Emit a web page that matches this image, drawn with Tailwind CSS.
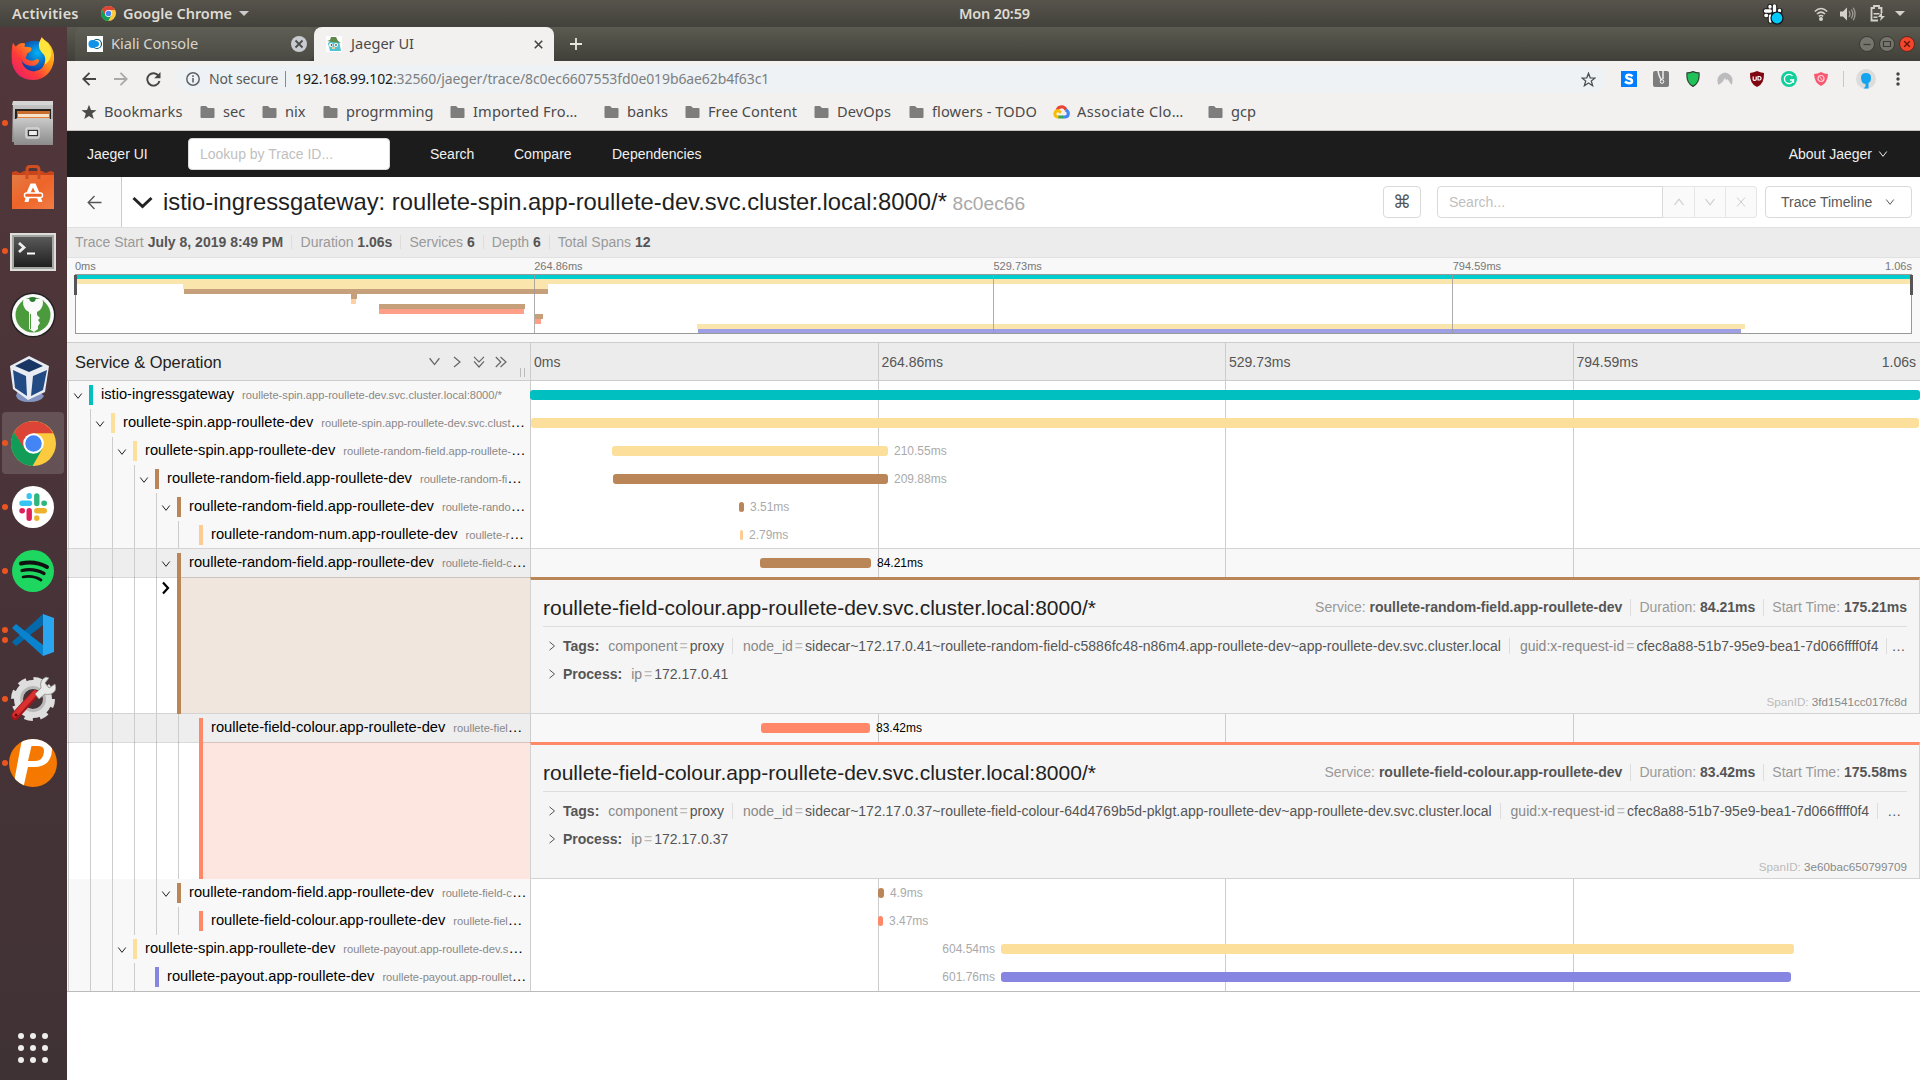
<!DOCTYPE html>
<html lang="en">
<head>
<meta charset="utf-8">
<title>Jaeger UI</title>
<script src="https://cdn.jsdelivr.net/npm/@tailwindcss/browser@4"></script>
</head>
<body class="w-[1920px] h-[1080px] overflow-hidden bg-white font-['Liberation_Sans',Arial,sans-serif] text-sm text-[#222]">
<svg class="hidden">
  <defs>
    <symbol id="chrome" viewBox="0 0 48 48">
      <circle cx="24" cy="24" r="24" fill="#fcca3f"/>
      <path d="M24 13H44.9A24 24 0 0 0 3.2 12L14 31Z" fill="#db4437"/>
      <path d="M3.2 12A24 24 0 0 0 23 48L33.5 29.5 24 34 14.5 29.5Z" fill="#119d58"/>
      <circle cx="24" cy="24" r="11" fill="#fff"/>
      <circle cx="24" cy="24" r="8.8" fill="#4385f4"/>
    </symbol>
    <symbol id="folder" viewBox="0 0 16 14"><path d="M1.5 1H6l2 2h5.500q1 0 1 1v8q0 1-1 1h-12q-1 0-1-1V2q0-1 1-1z" fill="#7d7d7d"/></symbol>
    <symbol id="down" viewBox="0 0 12 12"><path d="M1.500 3 6 8.800 10.500 3" fill="none" stroke="currentColor" stroke-width="1.200"/></symbol>
    <symbol id="right" viewBox="0 0 12 12"><path d="M3 1 9 6 3 11" fill="none" stroke="currentColor" stroke-width="1.200"/></symbol>
    <symbol id="ddown" viewBox="0 0 12 12"><path d="M1 .8 6 5.800 11 .8M1 5.300 6 11 11 5.300" fill="none" stroke="currentColor" stroke-width="1.200"/></symbol>
    <symbol id="dright" viewBox="0 0 12 12"><path d="M.8 1 5.800 6 .8 11M5.500 1 11 6 5.500 11" fill="none" stroke="currentColor" stroke-width="1.200"/></symbol>
  </defs>
</svg>

<!-- GNOME top bar -->
<header class="h-[27px] flex items-center bg-linear-to-b from-[#57544c] to-[#42413b] text-[#dfdbd2] font-['Noto_Sans',sans-serif] font-semibold text-[14.500px] leading-[26px]">
  <div class="w-[101px] pl-3 pb-[2px] tracking-[0.200px]">Activities</div>
  <svg class="size-[15px]"><use href="#chrome"/></svg>
  <div class="w-[116px] pl-[7px] pb-[2px] tracking-[-0.050px] whitespace-nowrap">Google Chrome</div>
  <div class="ml-[7px] border-x-[5px] border-x-transparent border-t-[5px] border-t-[#ccc]"></div>
  <div class="ml-[710px] w-[80px] pb-[2px] tracking-[-0.200px]">Mon 20:59</div>
  <svg class="ml-auto mr-[30px]" width="22" height="22" viewBox="0 0 22 22">
    <g stroke="#222" stroke-width="5.500" stroke-linecap="round"><path d="M8 3.500V7M12.500 3.500V9M3.500 8H9M14 8h4M4 12.500h4.500M8.500 13v5"/></g>
    <g stroke="#fff" stroke-width="3.300" stroke-linecap="round"><path d="M8 3.500v.5M12.500 3v5M3.500 8h4.800M17.500 7.500v.5M3.800 12.500h.8M8.500 13v5"/></g>
    <circle cx="15" cy="15" r="6" fill="#00c8f8" stroke="#111" stroke-width="1.200"/>
  </svg>
  <svg class="mr-3" width="14" height="16" viewBox="0 0 14 16" fill="none" stroke="#d5d2cb" stroke-width="1.600"><path d="M.8 5.500Q7-.5 13.200 5.500M3 8Q7 4.200 11 8M4.800 10.400Q7 8.600 9.200 10.400"/><circle cx="7" cy="13" r="1.200" fill="#d5d2cb"/></svg>
  <svg class="mr-[14px]" width="16" height="14" viewBox="0 0 16 14"><path d="M0 4.500h3l4-4v13l-4-4H0z" fill="#d5d2cb"/><path d="M9 4q2 3 0 6M11.300 2.500q3 4.500 0 9M13.300.8q3.500 6.200 0 12.400" fill="none" stroke="#a09d96" stroke-width="1.300"/></svg>
  <svg class="mr-[10px]" width="15" height="17" viewBox="0 0 15 17"><path d="M11.500 8V3H9V1H4v2H1.500v12.500H8" fill="none" stroke="#d5d2cb" stroke-width="1.800"/><path d="M3.500 8h6v1.500h-6zM3.500 11.500h4V13h-4zM12 7l-4 5h3l-1 4 5-5h-3z" fill="#d5d2cb"/></svg>
  <div class="mr-[15px] border-x-[5px] border-x-transparent border-t-[5px] border-t-[#d5d2cb]"></div>
</header>

<div class="flex h-[1053px]">
<!-- Dock -->
<aside class="w-[67px] pr-px shrink-0 bg-linear-to-b from-[#52373b] via-[#483338] to-[#3f3235] flex flex-col items-center relative" id="dock">
  <div class="h-16 flex items-center"><svg width="46" height="46" viewBox="0 0 48 48">
    <defs><linearGradient id="ff" x1="0" y1="1" x2="1" y2="0"><stop offset="0" stop-color="#e0167a"/><stop offset=".35" stop-color="#ff3a3a"/><stop offset=".65" stop-color="#ff9a15"/><stop offset="1" stop-color="#ffe52e"/></linearGradient><radialGradient id="fb" cx=".6" cy=".35"><stop offset="0" stop-color="#00b4f5"/><stop offset="1" stop-color="#1042a8"/></radialGradient></defs>
    <circle cx="25" cy="23" r="18" fill="url(#fb)"/>
    <path d="M3 7q2 3 3 4Q11 6 16 8q-1 2-1 3l7 1q2 4-4 6l-1 3q-2 2 2 4 5 2 9-1 3 0 2 3-3 5-9 4-8-1-9-7 1 12 13 13 11-1 12-13 0-6-4-9-4-5 0-14 3 4 7 6 7 8 6 18Q43 44 25 46 6 46 2 28 1 15 3 7z" fill="url(#ff)"/>
    <path d="M33 2q-6 8 0 15 6 5 3 13 8-5 7-15-1-7-10-13z" fill="#ffe43c"/></svg></div>
  <div class="h-16 flex items-center"><svg width="42" height="44" viewBox="0 0 42 44">
    <defs><linearGradient id="g1" x1="0" y1="0" x2="0" y2="1"><stop offset="0" stop-color="#c9c9c9"/><stop offset="1" stop-color="#8b8b8b"/></linearGradient></defs>
    <path d="M1 0h40v41H0z" fill="url(#g1)"/><path d="M1 0h40v4H0z" fill="#d5d5d5"/><path d="M3 8h36v11H3z" fill="#252220"/><path d="M5 10h33v8H5z" fill="#c96e2d"/><path d="M6 13h31v3H6z" fill="#f7e3cb"/><path d="M6 16h31v2H6z" fill="#e87e30"/><path d="M1 18h3l1-1h32l1 1h3v26H2z" fill="url(#g1)"/><rect x="14" y="27" width="13" height="10" rx="2" fill="#b4b4b4" stroke="#d6d6d6" stroke-width="1.500"/><path d="M16.500 29.500h9v5h-9z" fill="#eee" stroke="#333" stroke-width="1.200"/></svg></div>
  <div class="h-16 flex items-center"><svg width="42" height="44" viewBox="0 0 42 44">
    <defs><linearGradient id="g2" x1="0" y1="0" x2="1" y2="1"><stop offset="0" stop-color="#e37b45"/><stop offset=".5" stop-color="#ee6428"/><stop offset="1" stop-color="#f07d45"/></linearGradient></defs>
    <path d="M0 7 4 6l4 2 4-2h18l4 2 4-2 4 1v37H0z" fill="#c8451c"/><path d="M0 10h42v34H0z" fill="url(#g2)"/><path d="M15 14V5q0-3.500 3-3.500h6q3 0 3 3.500v9" fill="none" stroke="#cf4f22" stroke-width="3"/><path d="M18.500 18.500h5l4.300 10h-4l-2.800-6-2.800 6h-4zM13.500 33h4l-1 4h-4zM25 33h4l1.500 4h-4z" fill="#fff"/><rect x="12.500" y="28" width="18" height="4.500" rx="2" fill="#ee6428" stroke="#fff" stroke-width="1.500"/></svg></div>
  <div class="h-16 flex items-center pt-[2px]"><svg width="46" height="39" viewBox="0 0 46 39">
    <defs><linearGradient id="g3" x1="0" y1="0" x2="0" y2="1"><stop offset="0" stop-color="#595959"/><stop offset="1" stop-color="#202020"/></linearGradient></defs>
    <path d="M0 0h46v38H0z" fill="#dededc"/><path d="M2 2h42v34H2z" fill="#a5a5a2"/><path d="M4 4h38v30H4z" fill="url(#g3)"/><path d="m9 10 5 4.500L9 19" fill="none" stroke="#eee" stroke-width="2.800"/><path d="M17 20.500h8" stroke="#fff" stroke-width="2"/></svg></div>
  <div class="h-16 flex items-center"><svg width="46" height="46" viewBox="0 0 46 46"><circle cx="23" cy="23" r="22.500" fill="#222"/><circle cx="23" cy="23" r="21" fill="#fafafa"/><circle cx="23" cy="23" r="17.500" fill="#4b9b3d"/><path d="M14 7h18q2 3 0 8-1 3-5 5v3l3 3-2 2 2 3-2 3v3l-4 3-5-3V20q-4-2-5-5-2-5 0-8z" fill="#fafafa"/><path d="M19 6q4-2 7 0-.5 4-3.500 4T19 6z" fill="#2f7d34"/><path d="M20.500 22v15" stroke="#4b9b3d"/></svg></div>
  <div class="h-16 flex items-center mr-[7px]"><svg width="40" height="46" viewBox="0 0 40 46"><path d="m8 34 22 2 4 4q-3 6-15 6-11 0-13-6z" fill="#8294bf"/><path d="m19 0 20 10-4 26-17 8L3 33 0 10z" fill="#e9edf3"/><path d="m19 3 14 7-14 6-14-6z" fill="#173663"/><path d="m3 14 13 6 1 20-12-8zM37 14l-14 6-2 20 12-6z" fill="#234b83"/></svg></div>
  <div class="h-16 flex items-center"><div class="w-[62px] h-[62px] rounded-[4px] bg-white/15 flex items-center justify-center"><svg class="size-[45px]"><use href="#chrome"/></svg></div></div>
  <div class="h-16 flex items-center"><svg width="42" height="42" viewBox="0 0 42 42"><circle cx="21" cy="21" r="21" fill="#fff"/><g stroke-width="5.400" stroke-linecap="round"><path d="M10 17.200h7.500M17.200 9.800v.6" stroke="#36c5f0"/><path d="M24.800 10v7.500M32 17.200h.3" stroke="#2eb67d"/><path d="M24.800 24.800h7.500M24.800 32v.3" stroke="#ecb22e"/><path d="M17.200 24.800v7.500M10 24.800h.3" stroke="#e01e5a"/></g></svg></div>
  <div class="h-16 flex items-center"><svg width="42" height="42" viewBox="0 0 42 42"><circle cx="21" cy="21" r="21" fill="#1ed760"/><g fill="none" stroke="#111" stroke-linecap="round"><path d="M9 13.500q14-3 26 3.500" stroke-width="4"/><path d="M10 20.500q12-2.500 22 3" stroke-width="3.300"/><path d="M11 27q10-2 18 3" stroke-width="2.700"/></g></svg></div>
  <div class="h-16 flex items-center"><svg width="42" height="42" viewBox="0 0 42 42"><path d="m0 28 4 4L31 11V0z" fill="#0469ab"/><path d="m0 14 4-4 27 21v11z" fill="#0a83cf"/><path d="m31 0 11 4v34l-11 4z" fill="#29a6ef"/></svg></div>
  <div class="h-16 flex items-center"><svg width="46" height="46" viewBox="0 0 46 46"><circle cx="23" cy="23" r="15" fill="none" stroke="#dedede" stroke-width="8"/><circle cx="23" cy="23" r="19" fill="none" stroke="#dedede" stroke-width="6" stroke-dasharray="8 6.900"/><circle cx="23" cy="23" r="11.500" fill="none" stroke="#b9b9b9" stroke-width="3"/><path d="m5 40 20-22" stroke="#a3161b" stroke-width="8" stroke-linecap="round"/><path d="m5 39 20-22" stroke="#d8312f" stroke-width="5" stroke-linecap="round"/><path d="m25 18 6-6q-2-8 5-11l3 1-4 5 4 5 6-4q3 7-4 10-4 1-6 0l-6 5z" fill="#e9e9e7" stroke="#888" stroke-width=".8"/><circle cx="6" cy="39" r="1.500" fill="#600"/></svg></div>
  <div class="h-16 flex items-center"><svg width="48" height="48" viewBox="0 0 48 48"><defs><clipPath id="pc"><circle cx="24" cy="24" r="24"/></clipPath></defs><circle cx="24" cy="24" r="24" fill="#f57900"/><g clip-path="url(#pc)"><path d="M13 0h25q6 4 5 11-1 17-18 17h-6l-5 22-9-7z" fill="#fff"/><path d="m22.500 7-3.500 15h7q8 0 9-9 .5-6-5.500-6z" fill="#f57900"/></g></svg></div>
  <div class="mt-auto mb-[17px] grid grid-cols-3 gap-x-[6px] gap-y-[6px]">
    <i class="size-[6px] rounded-full bg-[#eee]"></i><i class="size-[6px] rounded-full bg-[#eee]"></i><i class="size-[6px] rounded-full bg-[#eee]"></i>
    <i class="size-[6px] rounded-full bg-[#eee]"></i><i class="size-[6px] rounded-full bg-[#eee]"></i><i class="size-[6px] rounded-full bg-[#eee]"></i>
    <i class="size-[6px] rounded-full bg-[#eee]"></i><i class="size-[6px] rounded-full bg-[#eee]"></i><i class="size-[6px] rounded-full bg-[#eee]"></i>
  </div>
</aside>

<main class="w-[1853px] flex flex-col">
<!-- Tab strip -->
<div class="h-[34px] flex items-stretch bg-linear-to-b from-[#5b5b51] to-[#403f39] font-['Noto_Sans',sans-serif] text-[14.600px]">
  <div class="ml-2 w-[239px] rounded-t-lg rounded-br-lg bg-linear-to-b from-[#605f56] to-[#4a4943] flex items-center text-[#d8d5cc] pr-[7px]">
    <svg class="ml-3 mr-2" width="16" height="16" viewBox="0 0 16 16"><path d="M0 0h16v16H0z" fill="#fff"/><circle cx="10" cy="8" r="4.500" fill="none" stroke="#00597c" stroke-width="1.200"/><circle cx="5.500" cy="8" r="4" fill="#0f93e8"/><circle cx="9" cy="8" r="3" fill="#0f93e8"/></svg>
    <span class="pb-[2px]">Kiali Console</span>
    <svg class="ml-auto" width="16" height="16" viewBox="0 0 16 16"><circle cx="8" cy="8" r="8" fill="#c8cbcf"/><path d="m4.500 4.500 7 7m0-7-7 7" stroke="#4d4d48" stroke-width="1.800"/></svg>
  </div>
  <div class="w-[240px] rounded-t-lg bg-[#f2f1f0] flex items-center text-[#4a4a4a] pl-3 pr-[11px]">
    <svg class="mr-[9px]" width="16" height="16" viewBox="0 0 16 16"><path d="M0 0h16v16H0z" fill="#fff"/><path d="M2 8q0-3 6-4 6 0 6 6l1 5H4l-1-4z" fill="#4fc3d3"/><path d="m1 5 3-1 1-3 5 0 2 4 3 2-8-1z" fill="#5f8a4b"/><circle cx="5" cy="9" r="2" fill="#fff"/><circle cx="10" cy="9" r="2" fill="#fff"/><circle cx="5.500" cy="9" r=".8"/><circle cx="10" cy="9" r=".8"/><path d="M6 11h3v2H6z" fill="#dfd0a3"/></svg>
    <span class="pb-[2px]">Jaeger UI</span>
    <svg class="ml-auto" width="9" height="9" viewBox="0 0 9 9"><path d="m.8.800 7.400 7.400m0-7.400L.8 8.200" stroke="#444" stroke-width="1.600"/></svg>
  </div>
  <svg class="ml-[15px] self-center" width="14" height="14" viewBox="0 0 14 14"><path d="M7 1v12M1 7h12" stroke="#e8e6e0" stroke-width="1.800"/></svg>
  <div class="ml-auto mr-[5px] flex items-center gap-[4px]">
    <svg width="16" height="16" viewBox="0 0 16 16"><circle cx="8" cy="8" r="7.500" fill="#76756d" stroke="#3a3934"/><path d="M4.500 8.500h7" stroke="#3b3a35" stroke-width="1.200"/></svg>
    <svg width="16" height="16" viewBox="0 0 16 16"><circle cx="8" cy="8" r="7.500" fill="#76756d" stroke="#3a3934"/><path d="M4.500 5.500h7v5h-7z" fill="none" stroke="#3b3a35" stroke-width="1.200"/></svg>
    <svg width="16" height="16" viewBox="0 0 16 16"><circle cx="8" cy="8" r="7.500" fill="#f2452a" stroke="#5a2a20"/><path d="m5.200 5.200 5.600 5.600m0-5.600-5.600 5.600" stroke="#5a160a" stroke-width="1.300"/></svg>
  </div>
</div>
<!-- Address bar -->
<div class="h-9 flex items-center bg-[#f2f1f0] font-['Noto_Sans',sans-serif] text-[14px] text-[#5a5a5a]">
  <svg class="ml-[15px]" width="14" height="14" viewBox="0 0 14 14"><path d="M14 7H1.500M7.500.8 1.300 7l6.200 6.200" fill="none" stroke="#454545" stroke-width="1.800"/></svg>
  <svg class="ml-[18px]" width="14" height="14" viewBox="0 0 14 14"><path d="M0 7h12.500M6.500.8 12.700 7l-6.200 6.200" fill="none" stroke="#a9a9a9" stroke-width="1.800"/></svg>
  <svg class="ml-[18px]" width="15" height="15" viewBox="0 0 15 15"><path d="M12.700 4A6.200 6.200 0 1 0 13.500 9" fill="none" stroke="#454545" stroke-width="1.900"/><path d="M14.500 0v6.300H8.200z" fill="#454545"/></svg>
  <div class="ml-[15px] w-[1430px] h-7 rounded-full bg-[#eef2f4] flex items-center whitespace-nowrap">
    <svg class="ml-[10px]" width="14" height="14" viewBox="0 0 14 14"><circle cx="7" cy="7" r="6.200" fill="none" stroke="#5f6368" stroke-width="1.500"/><path d="M7 6v4.500M7 3.300v1.600" stroke="#5f6368" stroke-width="1.600"/></svg>
    <span class="ml-[9px] w-[70px] tracking-[-0.200px]">Not secure</span>
    <span class="ml-[6px] w-px h-4 bg-[#8a8a8a]"></span>
    <span class="ml-[9px] tracking-[-0.100px] text-[#7c7f82]"><span class="text-[#1a1a1a]">192.168.99.102</span>:32560/jaeger/trace/8c0ec6607553fd0e019b6ae62b4f63c1</span>
    <svg class="ml-auto mr-[10px]" width="15" height="15" viewBox="0 0 15 15"><path d="m7.500 1.200 1.700 4.600 4.900.2-3.800 3 1.300 4.700-4.100-2.700-4.100 2.700L4.700 9 .9 6l4.900-.2z" fill="none" stroke="#4d5155" stroke-width="1.300"/></svg>
  </div>
  <div class="flex items-center gap-4 ml-[15px]">
    <svg width="16" height="16" viewBox="0 0 16 16"><path d="M0 0h16v16H0z" fill="#007eff"/><path d="M11.500 5.300Q10 3.800 8 3.800q-2.700 0-2.700 1.900 0 1.400 2.700 2.100 3 .6 3 2.400 0 2-3 2-2.200 0-4-1.700" fill="none" stroke="#fff" stroke-width="2.500"/></svg>
    <svg width="16" height="16" viewBox="0 0 16 16"><rect width="16" height="16" rx="2" fill="#7d7d7d"/><path d="M5 0q1 6 3.500 9M10 0v8" stroke="#eee" stroke-width="1.500" fill="none"/><circle cx="9" cy="10.500" r="1.800" fill="none" stroke="#fff"/></svg>
    <svg width="16" height="16" viewBox="0 0 16 16"><path d="M8 .6q3 1.200 6 1.300 1 10-6 13.500Q1 12 2 1.900 5 1.800 8 .6z" fill="#1fc159" stroke="#304434" stroke-width="1.200"/></svg>
    <svg width="16" height="16" viewBox="0 0 16 16"><path d="M1.500 14Q-1 8 2.500 4.200 8-1 13.500 4.200 17 8 14.500 14L10.500 8 9.300 9.500 8 7l-2.500 4z" fill="#bcbcbe"/></svg>
    <svg width="16" height="16" viewBox="0 0 16 16"><path d="M8 0q3 1.700 7 2 .5 11-7 14Q.5 13 1 2q4-.3 7-2z" fill="#800610"/><path d="M4.200 5.500v3.200q1.800 1.500 3 0V5.500M9 5.500h1q2 0 2 1.800T10 9H9z" fill="none" stroke="#fff" stroke-width="1.200"/></svg>
    <svg width="16" height="16" viewBox="0 0 16 16"><circle cx="8" cy="8" r="8" fill="#10cf9a"/><path d="M11.500 5A4.600 4.600 0 1 0 12.500 9H9M12.500 8v4" fill="none" stroke="#fff" stroke-width="1.300"/></svg>
    <svg width="16" height="16" viewBox="0 0 16 16"><path d="M8 1q3 2 7 2-.5 9-7 12Q1.500 12 1 3q4 0 7-2z" fill="#f95870"/><circle cx="8" cy="7.500" r="3" fill="none" stroke="#ffd3da" stroke-width="1.200"/><path d="m6.500 5.500 3 4" stroke="#ffd3da"/></svg>
  </div>
  <span class="ml-[14px] w-px h-4 bg-[#c8c8c8]"></span>
  <svg class="ml-3" width="20" height="20" viewBox="0 0 20 20"><circle cx="10" cy="10" r="10" fill="#dcdcdc"/><path d="M5 8.500Q5 4 10 4t5 4.500Q15 13 12.500 14v5.500H7.500l2-2V15Q5 14.500 5 8.500z" fill="#14a4ef"/></svg>
  <svg class="ml-[20px]" width="4" height="16" viewBox="0 0 4 16" fill="#444"><circle cx="2" cy="3" r="1.700"/><circle cx="2" cy="8" r="1.700"/><circle cx="2" cy="13" r="1.700"/></svg>
</div>
<!-- Bookmarks -->
<div class="h-[34px] shrink-0 bg-[#f2f1f0] border-b border-[#c5c4c2] pl-[14px] pb-[4px] flex items-center font-['Noto_Sans',sans-serif] text-[14.600px] text-[#4a4a4a] whitespace-nowrap" id="bookmarks"></div>

<!-- Jaeger navigation -->
<nav class="h-[46px] shrink-0 bg-[#1c1c1c] flex items-center text-[#f0f0f0]">
  <span class="ml-5 w-[101px]">Jaeger UI</span>
  <div class="w-[202px] h-8 rounded bg-white border border-[#d9d9d9] flex items-center pl-[11px] text-[#bfbfbf]">Lookup by Trace ID...</div>
  <span class="ml-10 w-[84px]">Search</span><span class="w-[98px]">Compare</span><span>Dependencies</span>
  <span class="ml-auto mr-[6px]">About Jaeger</span>
  <svg class="mr-[32px] size-[10px]"><use href="#down"/></svg>
</nav>

<!-- Trace header -->
<div class="h-[51px] shrink-0 flex items-center border-b border-[#e0e0e0]">
  <div class="w-[55px] h-full bg-[#fafafa] border-r border-[#ccc] flex items-center justify-center"><svg width="15" height="15" viewBox="0 0 15 15"><path d="M14.500 7.500H1.500M7.500 1 1.200 7.500 7.500 14" fill="none" stroke="#555" stroke-width="1.300"/></svg></div>
  <svg class="ml-[10px]" width="21" height="13" viewBox="0 0 21 13"><path d="m1.500 2 9 8.500 9-8.500" fill="none" stroke="#222" stroke-width="3"/></svg>
  <h1 class="ml-[10px] text-[23.800px] whitespace-nowrap text-[#1f1f1f]">istio-ingressgateway: roullete-spin.app-roullete-dev.svc.cluster.local:8000/* <span class="text-[19.200px] text-[#aaa] -ml-px">8c0ec66</span></h1>
  <div class="ml-auto w-[38px] h-8 border border-[#d9d9d9] rounded flex items-center justify-center text-[18px] text-[#555] font-['DejaVu_Sans',sans-serif]">⌘</div>
  <div class="ml-4 w-[226px] h-8 border border-[#d9d9d9] rounded-l flex items-center pl-[11px] text-[#bfbfbf]">Search...</div>
  <div class="flex h-8 bg-[#fafafa] border-y border-r border-[#e6e6e6] rounded-r text-[#ccc]">
    <div class="w-[31px] flex items-center justify-center"><svg class="size-3 rotate-180"><use href="#down"/></svg></div>
    <div class="w-[31px] border-l border-[#e6e6e6] flex items-center justify-center"><svg class="size-3"><use href="#down"/></svg></div>
    <div class="w-[31px] border-l border-[#e6e6e6] flex items-center justify-center"><svg width="10" height="10" viewBox="0 0 10 10"><path d="m1 0.500 8 9m0-9-8 9" stroke="currentColor"/></svg></div>
  </div>
  <div class="ml-2 mr-2 w-[147px] h-8 border border-[#d9d9d9] rounded flex items-center justify-between pl-[15px] pr-[16px] text-[#595959]">Trace Timeline<svg class="size-[10px]"><use href="#down"/></svg></div>
</div>
<!-- Trace summary -->
<div class="h-[30px] shrink-0 bg-[#ececec] border-b border-[#e1e1e1] pl-2 pb-px flex items-center text-[#999] [&_b]:text-[#555]">
  <div class="pr-2 mr-[8.500px] border-r border-[#ddd] leading-[14px]">Trace Start <b>July 8, 2019 8:49 PM</b></div>
  <div class="pr-2 mr-[8px] border-r border-[#ddd] leading-[14px]">Duration <b>1.06s</b></div>
  <div class="pr-2 mr-[8px] border-r border-[#ddd] leading-[14px]">Services <b>6</b></div>
  <div class="pr-2 mr-[8px] border-r border-[#ddd] leading-[14px]">Depth <b>6</b></div>
  <div class="leading-[14px]">Total Spans <b>12</b></div>
</div>
<!-- Minimap -->
<div class="h-[84px] shrink-0 bg-[#f8f8f8] px-2">
  <div class="h-4 grid grid-cols-4 text-[11px] leading-[17px] text-[#777] relative">
    <span>0ms</span><span>264.86ms</span><span>529.73ms</span><span>794.59ms</span><span class="absolute right-0">1.06s</span>
  </div>
  <div class="relative h-[60px] bg-white border border-[#999]" id="minimap"></div>
</div>
<!-- Timeline header -->
<div class="h-[39px] shrink-0 flex bg-[#ececec] border-y border-[#ccc] text-[#555]">
  <div class="w-[463px] pl-2 flex items-center relative">
    <h3 class="text-[16.400px] text-[#222] mr-auto pt-[3px]">Service &amp; Operation</h3>
    <div class="flex items-center gap-[10px] text-[#666] mr-[23px]"><svg class="size-[13px]"><use href="#down"/></svg><svg class="size-3"><use href="#right"/></svg><svg class="size-3"><use href="#ddown"/></svg><svg class="size-3"><use href="#dright"/></svg></div>
    <span class="absolute right-[5px] bottom-[3px] w-[5px] h-[9px] border-x border-[#bbb]"></span>
  </div>
  <div class="flex-1 grid grid-cols-4 relative leading-[39px] h-[37px]">
    <span class="h-[37px] border-l border-[#ccc] pl-[3px]">0ms</span><span class="h-[37px] border-l border-[#ccc] pl-[3px]">264.86ms</span><span class="h-[37px] border-l border-[#ccc] pl-[3px]">529.73ms</span><span class="h-[37px] border-l border-[#ccc] pl-[3px]">794.59ms</span>
    <span class="absolute right-1">1.06s</span>
  </div>
</div>
<!-- Spans -->
<div id="spans" class="border-b border-[#bbb] shrink-0"></div>
</main>
</div>

<script>
const folder = '<svg width="16" height="14"><use href="#folder"/></svg>';
const star = '<svg width="16" height="16" viewBox="0 0 16 16"><path d="m8 .8 2 5.200 5.500.2-4.300 3.400 1.500 5.400L8 11.900 3.300 15l1.500-5.400L.5 6.200 6 6z" fill="#4a4a4a"/></svg>';
const gcp = '<svg width="17" height="14" viewBox="0 0 17 14" fill="none" stroke-width="3"><path d="M4 5.500Q5 2 8.500 1.800 12 2 13 5" stroke="#ea4335"/><path d="M12.500 5Q15.500 6 15.300 9q-.3 3-3.500 3H9.500" stroke="#4285f4"/><path d="M10 12H5" stroke="#34a853"/><path d="M5.500 12Q2 12 1.800 9 2 6 5 5.500l3 2" stroke="#fbbc05"/></svg>';
const marks = [['Bookmarks',119,star,.1],['sec',62,folder,0],['nix',61,folder,0],['progrmming',127,folder,0],['Imported Fro…',154,folder,.15],['banks',81,folder,0],['Free Content',129,folder,.05],['DevOps',95,folder,.1],['flowers - TODO',144,folder,.1],['Associate Clo…',155,gcp,.35],['gcp',80,folder,0]];
document.getElementById('bookmarks').innerHTML = marks.map(([t,w,i,ls]) =>
  `<div class="shrink-0 flex items-center gap-[7px]" style="width:${w}px">${i}<span style="letter-spacing:${ls}px">${t}</span></div>`).join('');

// running-application dots: vertical centre of each in the dock
document.getElementById('dock').insertAdjacentHTML('beforeend', [96,224,416,480,544,603,613,672,736].map(y =>
  `<i class="absolute left-[2px] size-[6px] rounded-full bg-[#e95420]" style="top:${y-3}px"></i>`).join(''));

// minimap bars: left, width, row, colour
const mini = [[0,1836,0,'#00cdd0'],[0,1836,1,'#fae5ac'],[107,365,2,'#fae5ac'],[108,364,3,'#c69f7b'],[275,6,4,'#c69f7b'],[275,5,5,'#fdd0a5'],[303,146,6,'#c69f7b'],[303,145,7,'#ff9f88'],[459,8,8,'#c69f7b'],[459,6,9,'#ff9f88'],[621,1048,10,'#fae5ac'],[622,1043,11,'#9e9ee5']];
document.getElementById('minimap').innerHTML = mini.map(([l,w,r,c]) =>
  `<i class="absolute" style="left:${l}px;width:${w}px;top:${r*5-(r?1:0)}px;background:${c};height:${r===0||r===11?4:5}px"></i>`).join('') +
  [458,917,1376].map(p => `<i class="absolute inset-y-0 w-px bg-[#999]/80" style="left:${p}px"></i>`).join('') +
  '<i class="absolute -left-[2px] top-0 w-[3px] h-5 bg-[#555]"></i><i class="absolute -right-[2px] top-0 w-[3px] h-5 bg-[#555]"></i>';

const T='#00bfc0', Y='#fbdf9b', B='#ba8557', P='#fdcb93', S='#ff8868', V='#8686e2';
const end='.app-roullete-dev', svc=end+'.svc.cluster.local:8000/*';
const rows = [
 [1,T,'istio-ingressgateway','roullete-spin'+svc,0,1390,'',1],
 [2,Y,'roullete-spin'+end,'roullete-spin'+svc,1,1388,'',1],
 [3,Y,'roullete-spin'+end,'roullete-random-field'+svc,82,276,'210.55ms',1],
 [4,B,'roullete-random-field'+end,'roullete-random-field'+svc,83,275,'209.88ms',1],
 [5,B,'roullete-random-field'+end,'roullete-random-num'+svc,209,5,'3.51ms',1],
 [6,P,'roullete-random-num'+end,'roullete-random-num'+svc,210,3,'2.79ms',0],
 [5,B,'roullete-random-field'+end,'roullete-field-colour'+svc,230,111,'84.21ms',1,
   {bg:'#f0e6de',service:'roullete-random-field'+end,start:'175.21ms',ip:'172.17.0.41',node:'sidecar~172.17.0.41~roullete-random-field-c5886fc48-n86m4.app-roullete-dev~app-roullete-dev.svc.cluster.local',id:'3fd1541cc017fc8d',gap:5}],
 [6,S,'roullete-field-colour'+end,'roullete-field-colour'+svc,231,109,'83.42ms',0,
   {bg:'#fee6e0',service:'roullete-field-colour'+end,start:'175.58ms',ip:'172.17.0.37',node:'sidecar~172.17.0.37~roullete-field-colour-64d4769b5d-pklgt.app-roullete-dev~app-roullete-dev.svc.cluster.local',id:'3e60bac650799709',gap:10}],
 [5,B,'roullete-random-field'+end,'roullete-field-colour'+svc,348,6,'4.9ms',1],
 [6,S,'roullete-field-colour'+end,'roullete-field-colour'+svc,348,5,'3.47ms',0],
 [3,Y,'roullete-spin'+end,'roullete-payout'+svc,471,793,'604.54ms',1],
 [4,V,'roullete-payout'+end,'roullete-payout'+svc,471,790,'601.76ms',0]];
const guide = '<i class="w-[22px] shrink-0 border-l border-[#ccc]"></i>';
const eq = '<span class="text-[#bbb] px-[2px]">=</span>';
const tag = (k,v) => `<span class="pr-2 mr-[10px] border-r border-[#ddd] leading-4"><span class="text-[#888]">${k}</span>${eq}${v}</span>`;
document.getElementById('spans').innerHTML = rows.map(([d,c,name,op,l,w,label,kids,x]) => {
  const arrow = kids ? '<svg class="size-[10px] mt-px text-[#222]"><use href="#down"/></svg>' : '';
  const before = l > 450;
  let h = `<div class="flex h-7 ${x ? 'relative bg-[#eee] shadow-[0_-1px_0_#d3d3d3]' : 'bg-[#f8f8f8]'}">
   <div class="w-[463px] pl-px flex">
    ${guide.repeat(d-1)}<i class="w-[21px] shrink-0 border-l border-[#ccc] flex items-center justify-center pr-[3px]">${arrow}</i>
    <i class="w-1 shrink-0 mt-1 ${x ? '' : 'mb-1'}" style="background:${c}"></i>
    <div class="flex-1 min-w-0 pl-2 pr-[3px] truncate text-[14.700px] leading-[26px] text-black">${name}<span class="ml-2 text-[11.150px] text-[#888]">${op}</span></div>
   </div>
   <div class="flex-1 relative grid grid-cols-4 ${x ? 'bg-[#f8f8f8]' : 'bg-white'}">
    <i class="border-l border-[#ccc]"></i><i class="border-l border-[#ccc]"></i><i class="border-l border-[#ccc]"></i><i class="border-l border-[#ccc]"></i>
    <div class="absolute left-0 top-[9px] h-[10px] flex items-center ${before ? 'flex-row-reverse' : ''}" style="${before ? `left:auto;right:${1390-l-w}px` : `padding-left:${l}px`}">
     <i class="h-[10px] rounded-[3px] shrink-0" style="width:${w}px;background:${c}"></i><span class="text-[12px] mx-[6px] pt-[2px] ${x ? 'text-black' : 'text-[#aaa]'}">${label}</span>
    </div>
   </div></div>`;
  if (x) h += `<div class="flex h-[137px]">
   <div class="w-[463px] pl-px flex relative">${guide.repeat(d-1)}<i class="w-[21px] shrink-0 border-l border-[#ccc] pl-[5px] pt-1">${d===5 ? '<svg width="8" height="14" viewBox="0 0 8 14"><path d="m1 1.500 5 5.500-5 5.500" fill="none" stroke="#000" stroke-width="2.200"/></svg>' : ''}</i>
    <i class="w-1 shrink-0 relative z-10" style="background:${c}"></i><i class="flex-1" style="background:${x.bg}"></i>
    <i class="absolute inset-x-0 top-0 h-px bg-black/15"></i>
   </div>
   <div class="flex-1 min-w-0 border-t-[3px] border-l border-r border-b border-[#d3d3d3] bg-[#f5f5f5] px-3 flex flex-col whitespace-nowrap text-[#555]" style="border-top-color:${c}">
    <div class="h-[47px] flex items-center pt-2 border-b border-[#ddd]">
     <h2 class="text-[21px] text-[#222] mr-auto pt-[2px]">roullete-field-colour${svc}</h2>
     <span class="text-[#999] border-r border-[#ddd] pr-2 mr-2 leading-[17px]">Service: <b class="text-[#555]">${x.service}</b></span>
     <span class="text-[#999] border-r border-[#ddd] pr-2 mr-2 leading-[17px]">Duration: <b class="text-[#555]">${label}</b></span>
     <span class="text-[#999] leading-[17px]">Start Time: <b class="text-[#555]">${x.start}</b></span>
    </div>
    <div class="h-7 mt-[5px] flex items-center"><svg class="size-[10px] ml-1 mr-[6px]"><use href="#right"/></svg><b class="mr-[9px]">Tags:</b>
     ${tag('component','proxy')}${tag('node_id',x.node)}<span class="pr-2 border-r border-[#ddd] leading-4"><span class="text-[#888]">guid:x-request-id</span>${eq}cfec8a88-51b7-95e9-bea1-7d066ffff0f4</span><span style="padding-left:${x.gap-1}px">…</span></div>
    <div class="h-7 flex items-center"><svg class="size-[10px] ml-1 mr-[6px]"><use href="#right"/></svg><b class="mr-[9px]">Process:</b><span class="text-[#888]">ip</span>${eq}${x.ip}</div>
    <div class="mt-auto text-right text-[11.650px] leading-[22px] text-[#bbb]">SpanID: <span class="text-[#888]">${x.id}</span></div>
   </div></div>`;
  return h;
}).join('');
</script>
</body>
</html>
